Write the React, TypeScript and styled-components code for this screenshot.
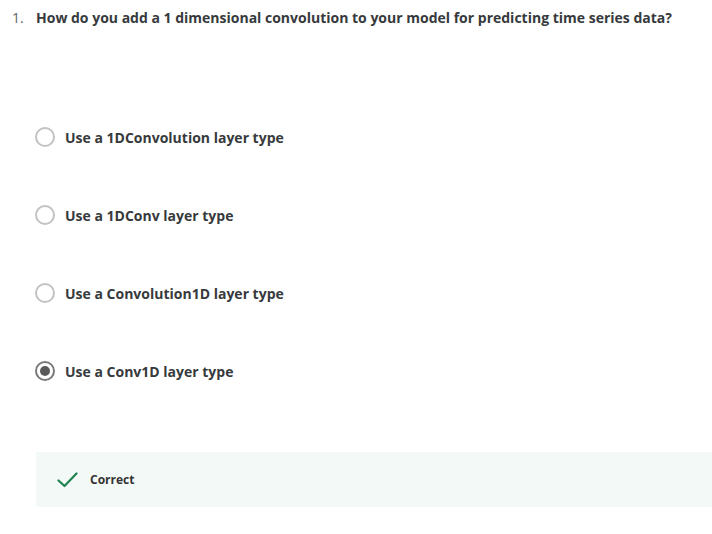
import React from 'react';
import styled, { createGlobalStyle } from 'styled-components';

const GlobalStyle = createGlobalStyle`
  html, body {
    margin: 0;
    padding: 0;
    background: #ffffff;
  }
  body {
    font-family: "Open Sans", "Liberation Sans", sans-serif;
    color: #333333;
  }
`;

const Page = styled.div`
  width: 712px;
  height: 534px;
  padding-top: 8px;
  box-sizing: border-box;
`;

const QuestionRow = styled.div`
  display: flex;
  align-items: baseline;
  padding-left: 12px;
  line-height: 20px;
  font-size: 14px;
`;

const QuestionNumber = styled.span`
  width: 24px;
  flex-shrink: 0;
  color: #666666;
  font-weight: 400;
`;

const QuestionText = styled.h3`
  margin: 0;
  font-size: 14px;
  font-weight: 700;
  color: #373a3c;
`;

const OptionList = styled.div`
  display: flex;
  flex-direction: column;
  gap: 58px;
  margin: 99px 0 0 35px;
`;

const OptionRow = styled.label`
  display: flex;
  align-items: center;
  gap: 10px;
  height: 20px;
  font-size: 14px;
  font-weight: 700;
  color: #373a3c;
`;

const Radio = styled.span<{ checked?: boolean }>`
  width: 20px;
  height: 20px;
  box-sizing: border-box;
  border-radius: 50%;
  border: 2px solid ${(p) => (p.checked ? '#7a7a7a' : '#c2c2c2')};
  display: flex;
  align-items: center;
  justify-content: center;

  &::after {
    content: '';
    display: ${(p) => (p.checked ? 'block' : 'none')};
    width: 10px;
    height: 10px;
    border-radius: 50%;
    background: #5a5a5a;
  }
`;

const Feedback = styled.div`
  margin: 71px 0 0 36px;
  height: 55px;
  background: #f3f9f6;
  display: flex;
  align-items: center;
  padding-left: 21px;
  gap: 12px;
`;

const FeedbackText = styled.span`
  font-size: 12px;
  font-weight: 700;
  color: #333333;
`;

const options = [
  { label: 'Use a 1DConvolution layer type', checked: false },
  { label: 'Use a 1DConv layer type', checked: false },
  { label: 'Use a Convolution1D layer type', checked: false },
  { label: 'Use a Conv1D layer type', checked: true },
];

const CheckIcon = () => (
  <svg width="21" height="16" viewBox="0 0 21 16" fill="none">
    <path d="M1.5 8.5 L7.5 14 L19.5 1.5" stroke="#1f8354" strokeWidth="2.2" strokeLinecap="round" strokeLinejoin="round" />
  </svg>
);

export default function App() {
  return (
    <>
      <GlobalStyle />
      <Page>
        <QuestionRow>
          <QuestionNumber>1.</QuestionNumber>
          <QuestionText>How do you add a 1 dimensional convolution to your model for predicting time series data?</QuestionText>
        </QuestionRow>
        <OptionList>
          {options.map((o) => (
            <OptionRow key={o.label}>
              <Radio checked={o.checked} />
              {o.label}
            </OptionRow>
          ))}
        </OptionList>
        <Feedback>
          <CheckIcon />
          <FeedbackText>Correct</FeedbackText>
        </Feedback>
      </Page>
    </>
  );
}
